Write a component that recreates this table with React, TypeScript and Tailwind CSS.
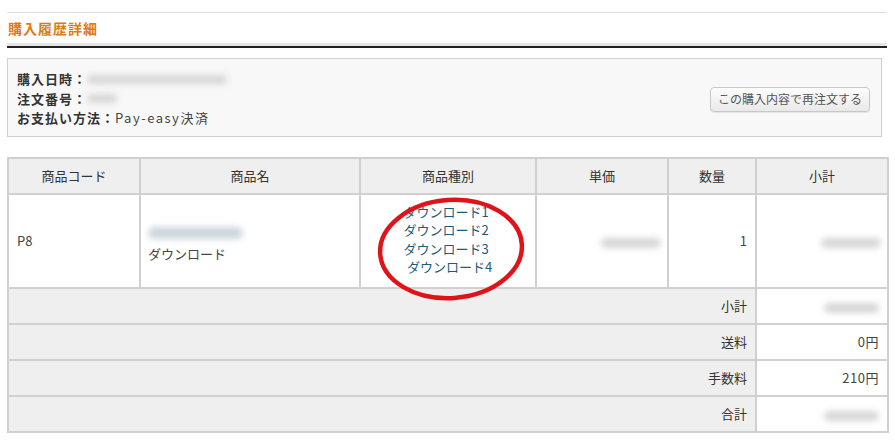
import React from 'react';

const jp = { fontFamily: '"Noto Sans CJK JP", "DejaVu Sans", sans-serif' };

function Blur({ w, h = 10, tone = 'bg-[#d6d6d6]' }: { w: string; h?: number; tone?: string }) {
  return <span className={`inline-block align-middle rounded-full blur-[3px] ${tone} ${w}`} style={{ height: h }} />;
}

const summary = [
  { label: '小計', value: null },
  { label: '送料', value: '0円' },
  { label: '手数料', value: '210円' },
  { label: '合計', value: null },
];

export default function App() {
  return (
    <div className="w-[895px] h-[444px] bg-white text-[13px] text-[#333] overflow-hidden" style={jp}>
      <div className="pl-[7px] pr-[8px] pt-[12px]">
        {/* Title */}
        <div className="border-t border-[#dcdcdc]">
          <h1 className="h-[30px] flex items-center pl-[1px] text-[14px] font-bold tracking-[1px] text-[#e07a12]">購入履歴詳細</h1>
          <div className="h-[3px] bg-[#e6e6e6]" />
          <div className="h-[2px] bg-[#222]" />
        </div>

        {/* Order info */}
        <div className="mt-[10px] mr-[5px] h-[79px] border border-[#cfcfcf] bg-[#f8f8f8] flex items-center justify-between pl-[9px] pr-[11px]">
          <div className="flex flex-col leading-[19.5px] pt-[2px] text-[#333]">
            <div className="flex items-center">
              <span className="font-bold tracking-[1px]">購入日時：</span>
              <Blur w="w-[140px]" h={9} />
            </div>
            <div className="flex items-center">
              <span className="font-bold tracking-[1px]">注文番号：</span>
              <Blur w="w-[30px]" h={9} />
            </div>
            <div className="flex items-center">
              <span className="font-bold tracking-[1px]">お支払い方法：</span>
              <span className="tracking-[1.5px] text-[#444]">Pay-easy決済</span>
            </div>
          </div>
          <button className="h-[25px] w-[160px] mt-[3px] rounded-[4px] border border-[#c8c8c8] bg-gradient-to-b from-[#fdfdfd] to-[#e9e9e9] text-[12px] text-[#555] shadow-[0_1px_1px_rgba(0,0,0,0.08)]">
            この購入内容で再注文する
          </button>
        </div>

        {/* Table */}
        <div className="relative mt-[20px]">
          <table className="w-[880px] border-collapse table-fixed text-[#444]">
            <colgroup>
              <col className="w-[132px]" />
              <col className="w-[220px]" />
              <col className="w-[176px]" />
              <col className="w-[132px]" />
              <col className="w-[88px]" />
              <col className="w-[132px]" />
            </colgroup>
            <thead>
              <tr className="h-[36px] bg-[#efefef] text-[#333]">
                {['商品コード', '商品名', '商品種別', '単価', '数量', '小計'].map((h) => (
                  <th key={h} className="border-2 border-[#d0d0d0] font-normal text-center">{h}</th>
                ))}
              </tr>
            </thead>
            <tbody>
              <tr className="h-[94px]">
                <td className="border-2 border-[#d0d0d0] pl-[8px]">P8</td>
                <td className="border-2 border-[#d0d0d0] pl-[7px]">
                  <div className="flex flex-col pt-[8px]">
                    <Blur w="w-[95px]" h={12} tone="bg-[#cdd6dc]" />
                    <span className="mt-[5px]">ダウンロード</span>
                  </div>
                </td>
                <td className="border-2 border-[#d0d0d0] text-center text-[#1b5c78] leading-[18.5px] pb-[3px] pr-[4px]">
                  <div>ダウンロード1</div>
                  <div>ダウンロード2</div>
                  <div>ダウンロード3</div>
                  <div className="pl-[7px]">ダウンロード4</div>
                </td>
                <td className="border-2 border-[#d0d0d0] text-right pr-[6px]">
                  <Blur w="w-[60px]" h={10} />
                </td>
                <td className="border-2 border-[#d0d0d0] text-right pr-[8px]">1</td>
                <td className="border-2 border-[#d0d0d0] text-right pr-[6px]">
                  <Blur w="w-[60px]" h={10} />
                </td>
              </tr>
              {summary.map((s) => (
                <tr key={s.label} className="h-[36px]">
                  <td colSpan={5} className="border-2 border-[#d0d0d0] bg-[#efefef] text-right pr-[8px] text-[#333]">{s.label}</td>
                  <td className="border-2 border-[#d0d0d0] bg-white text-right pr-[8px] tracking-[0.5px]">
                    {s.value ?? <Blur w="w-[55px]" h={10} />}
                  </td>
                </tr>
              ))}
            </tbody>
          </table>

          {/* red hand-drawn circle */}
          <svg className="absolute left-[366px] top-[38px] pointer-events-none" width="156" height="108" viewBox="0 0 156 108">
            <ellipse cx="78" cy="54" rx="71" ry="49" fill="none" stroke="#e0131b" strokeWidth="4.5" transform="rotate(-4 78 54)" />
          </svg>
        </div>
      </div>
    </div>
  );
}
